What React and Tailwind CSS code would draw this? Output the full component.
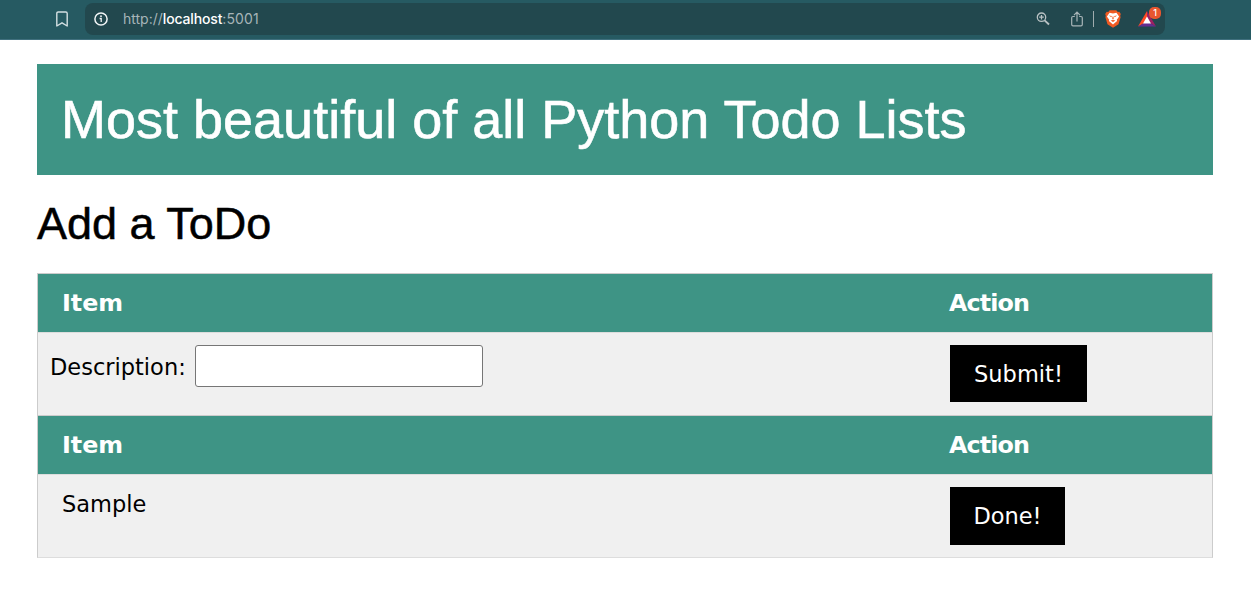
import React from "react";

function Bookmark() {
  return (
    <svg width="12" height="16" viewBox="0 0 12 16" fill="none" stroke="#d3dfe2" strokeWidth="1.4" strokeLinejoin="round">
      <path d="M2.2 1h7.6Q11.2 1 11.2 2.4V15L6 11.8.8 15V2.4Q.8 1 2.2 1Z" />
    </svg>
  );
}

function Info() {
  return (
    <svg width="14" height="14" viewBox="0 0 14 14" fill="none" stroke="#f1f5f6" strokeWidth="1.5">
      <circle cx="7" cy="7" r="6.1" />
      <path d="M5.6 6.5H7.2V10" strokeWidth="1.3" />
      <circle cx="7" cy="4.2" r=".9" fill="#f1f5f6" stroke="none" />
    </svg>
  );
}

function Zoom() {
  return (
    <svg width="14" height="14" viewBox="0 0 14 14" fill="none" stroke="#b9c2c4" strokeWidth="1.3">
      <circle cx="5.5" cy="5.2" r="4.2" />
      <path d="M3.2 5.2h4.6M5.5 2.9v4.6" />
      <path d="m8.6 8.3 4.4 4.2" strokeWidth="1.8" />
    </svg>
  );
}

function Share() {
  return (
    <svg width="12" height="16" viewBox="0 0 12 16" fill="none" stroke="#a9b5b8" strokeWidth="1.2">
      <path d="M3.8 5.5H2Q.7 5.5.7 6.8V13.5Q.7 14.8 2 14.8h8q1.3 0 1.3-1.3V6.8Q11.3 5.5 10 5.5H8.2M6 10.5V1.2M3 4.1 6 1.1l3 3" />
    </svg>
  );
}

function Lion() {
  return (
    <svg width="16" height="18" viewBox="0 0 16 18">
      <path fill="#f15a22" d="M4.7.3h6.6L12.8 2l1.5-.2L15.8 4l-.6 1.8.4 1.4-2.1 7L8 17.8 2.5 14.2.4 7.2l.4-1.4L.2 4l1.5-2.2 1.5.2Z" />
      <path fill="#fff" d="m4.6 2.7 3.4.7 3.4-.7 2.7 3.7-2.3 3.3.3 1.4L8 14.4l-4.1-3.3.3-1.4L1.9 6.4Z" />
      <path fill="#f15a22" d="m3.7 5.4 3.1.7-.4 1.2ZM12.3 5.4l-3.1.7.4 1.2ZM7.5 6.5h1l.2 2.4-.7.6-.7-.6ZM5.6 10.6 8 10l2.4.6L8 12Z" />
    </svg>
  );
}

function Rewards() {
  return (
    <svg width="18" height="16" viewBox="0 0 18 16">
      <path fill="#ff4b24" d="M9 0 0 15.5 9 10.5Z" />
      <path fill="#9e1f63" d="M9 0 18 15.5 9 10.5Z" />
      <path fill="#662d91" d="M0 15.5h18L9 10.5Z" />
      <path fill="#fff" d="m9 5.5 4 6.9H5Z" />
    </svg>
  );
}

function HeaderRow() {
  return (
    <div className="flex h-[59px] items-center border-b border-[#dddddd] bg-[#3e9485] pt-0.5 text-[23.8px] font-bold text-white">
      <div className="w-[912px] pl-6">Item</div>
      <div className="-ml-px tracking-[-0.9px]">Action</div>
    </div>
  );
}

export default function App() {
  return (
    <div className="h-[609px] w-[1251px] overflow-hidden bg-white font-['DejaVu_Sans',sans-serif] text-black">
      <div className="flex h-10 items-start border-b border-[#40707e] bg-[#265a62] pl-14">
        <div className="mt-[11px] w-[29px]"><Bookmark /></div>
        <div className="mt-[3px] flex h-8 w-[1080px] items-center rounded-lg bg-[#22484e] pl-[9px] font-[Inter,sans-serif] text-[14px] text-[#a7b5b8]">
          <Info />
          <span className="-mt-px ml-[15px] w-[913px]">http://<span className="font-medium tracking-[-0.15px] text-white">localhost</span><span className="tracking-[0.1px]">:5001</span></span>
          <Zoom />
          <div className="ml-[21px]"><Share /></div>
          <div className="ml-[10px] h-4 w-px bg-[#a0acae]" />
          <div className="ml-[11px]"><Lion /></div>
          <div className="relative ml-[17px]">
            <Rewards />
            <span className="absolute -top-[4px] left-[11px] flex h-3 w-3 items-center justify-center rounded-[5px] bg-[#e8562f] text-[9px] font-medium text-white">1</span>
          </div>
        </div>
      </div>
      <main className="ml-[37px] mt-6 w-[1176px]">
        <h1 className="h-[111px] bg-[#3e9485] pl-6 pt-[13px] font-['Liberation_Sans',sans-serif] text-[54px] leading-[84px] text-white [-webkit-text-stroke:0.6px_white]">Most beautiful of all Python Todo Lists</h1>
        <h2 className="h-[98px] pt-[14px] font-['Liberation_Sans',sans-serif] text-[45px] leading-[70px] [-webkit-text-stroke:0.5px_black]">Add a ToDo</h2>
        <section className="h-[285px] border border-b-[#dddddd] border-l-[#cccccc] border-r-[#cccccc] border-t-[#cccccc] bg-[#f0f0f0] text-[22.5px]">
          <HeaderRow />
          <div className="flex h-[83px] items-start border-b border-[#cccccc] pt-3">
            <div className="flex w-[912px] items-center pl-3">
              <label htmlFor="description" className="w-[145px] pt-[3px]">Description:</label>
              <input id="description" className="h-[42px] w-[288px] rounded-[3px] border border-[#767676] bg-white" />
            </div>
            <button className="h-[57px] w-[137px] bg-black pt-[3px] text-white">Submit!</button>
          </div>
          <HeaderRow />
          <div className="flex items-start pt-3">
            <div className="w-[912px] pl-6 pt-px">Sample</div>
            <button className="h-[58px] w-[115px] bg-black pt-px text-white">Done!</button>
          </div>
        </section>
      </main>
    </div>
  );
}
